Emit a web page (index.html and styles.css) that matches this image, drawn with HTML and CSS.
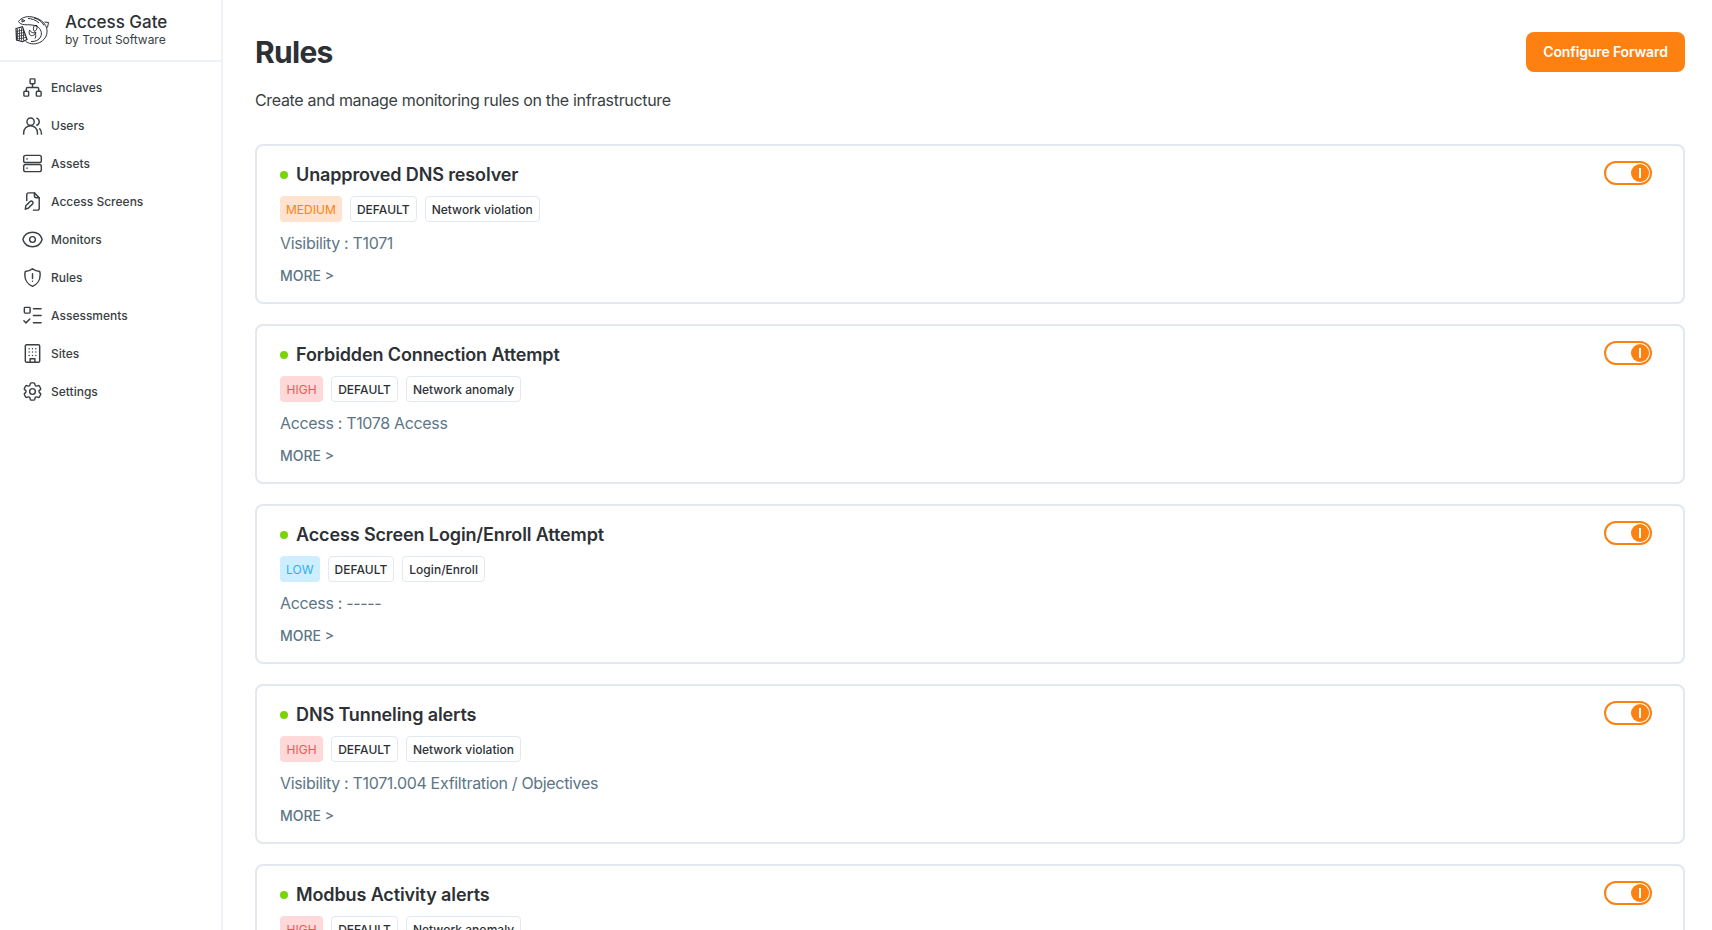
FILE: index.html
```html
<!DOCTYPE html>
<html lang="en">
<head>
<meta charset="utf-8">
<title>Rules - Access Gate</title>
<link rel="stylesheet" href="styles.css">
</head>
<body>
<aside class="sidebar">
  <div class="brand">
    <svg class="logo" viewBox="0 0 34 30" fill="none" stroke="#2b2f33" stroke-width="1">
      <path d="M3.500 6.500C6 3 11 1 16 1.800c6 .8 11.500 3.500 14.500 8.500 2.500 4.500 2 10-1.500 14-3.500 4-9.500 5.500-14.500 4-1.500-.4-3-1.200-4-2"/>
      <path d="M3.500 6.500c1 1.800 3 3 6 3.200 4 .3 9-.5 13 2 3.500 2.300 5 6.500 3 10.300-1.500 3-5 4.800-9.500 4.500"/>
      <path d="M7 4.500l3 1.200-3 1.300zM13 3.500c3.500 0 8 1.500 11 4.500M19 3c4.500 1.200 8 3.500 10 7.500M29.500 7l4 .5-1 5"/>
      <path d="M14.500 15c1.500 2.500 3.500 3.500 6.500 2.500-1 3-4 3.800-6 2.500-1-.8-1-3-.5-5zM19.500 10.500c-1.500 2-1.500 4 0 6 2-1 3-3 2.500-6zM20 18c1 2 1 3.500 0 5.500"/>
      <path d="M1 13.500l6.500-1.800L12 24.500l-4.500 2-6-1.500z" stroke-width="1.200"/>
      <path d="M2.500 14v10.500M4.500 13.500v11.500M6.500 13v12.500M8.500 14.500v11M1 16.500l7-1.500M1 19l8-1.500M1.500 21.500l8.500-1.500M1.500 24l9.500-1.500" stroke-width=".8"/>
    </svg>
    <div class="brand-text">
      <div class="brand-name">Access Gate</div>
      <div class="brand-sub">by Trout Software</div>
    </div>
  </div>
  <nav class="nav">
    <a class="nav-item"><svg class="nav-icon" viewBox="0 0 24 24"><rect x="9.500" y="3" width="5" height="5" rx=".8"/><rect x="3" y="16" width="5" height="5" rx="1"/><rect x="16" y="16" width="5" height="5" rx="1"/><path d="M12 8v4M5.500 16v-2.500A1.500 1.500 0 0 1 7 12h10a1.500 1.500 0 0 1 1.500 1.500V16"/></svg>Enclaves</a>
    <a class="nav-item"><svg class="nav-icon" viewBox="0 0 24 24"><circle cx="10" cy="8" r="3.800"/><path d="M2.800 21v-1.500a7.200 7.200 0 0 1 14.400 0V21M16.500 4.300a4 4 0 0 1 0 7.400M19.500 15.500a7 7 0 0 1 1.800 4.500v1"/></svg>Users</a>
    <a class="nav-item"><svg class="nav-icon" viewBox="0 0 24 24"><rect x="2.800" y="3.500" width="18.400" height="7.500" rx="2"/><rect x="2.800" y="13" width="18.400" height="7.500" rx="2"/><path d="M6 7.200h.6M6 16.800h.6"/></svg>Assets</a>
    <a class="nav-item"><svg class="nav-icon" viewBox="0 0 24 24"><path d="M6 11V5a2 2 0 0 1 2-2h6l5 5v11a2 2 0 0 1-2 2h-4"/><path d="M14 3v3a2 2 0 0 0 2 2h3"/><path d="M5 16.500l4.500-4.500a1.700 1.700 0 0 1 2.500 2.500L7.500 19 4.500 20z"/></svg>Access Screens</a>
    <a class="nav-item"><svg class="nav-icon" viewBox="0 0 24 24"><path d="M2.036 12.322a1.012 1.012 0 0 1 0-.639C3.423 7.510 7.360 4.500 12 4.500c4.638 0 8.573 3.007 9.963 7.178.07.207.07.431 0 .639C20.577 16.490 16.640 19.500 12 19.500c-4.638 0-8.573-3.007-9.963-7.178Z"/><circle cx="12" cy="12" r="3"/></svg>Monitors</a>
    <a class="nav-item"><svg class="nav-icon" viewBox="0 0 24 24"><path d="M12 2.800c2 1.700 4.500 2.700 7.500 2.900.3 1 .5 2.100.5 3.300 0 5.600-3.400 10.400-8 12.200-4.600-1.800-8-6.600-8-12.200 0-1.200.2-2.300.5-3.300 3-.2 5.500-1.200 7.500-2.900Z"/><path d="M12 8v5M12 16h.01"/></svg>Rules</a>
    <a class="nav-item"><svg class="nav-icon" viewBox="0 0 24 24"><rect x="3.500" y="3.500" width="6" height="6" rx=".8"/><path d="M13 5h8M13 12h8M13 19.500h8M3 17.500l2.200 2.200 4-4"/></svg>Assessments</a>
    <a class="nav-item"><svg class="nav-icon" viewBox="0 0 24 24"><rect x="4.500" y="2.800" width="15" height="18.400" rx="1.500"/><path d="M9.500 21v-3.500h5V21M8.500 7h.01M12 7h.01M15.500 7h.01M8.500 10.500h.01M12 10.500h.01M15.500 10.500h.01M8.500 14h.01M12 14h.01M15.500 14h.01"/></svg>Sites</a>
    <a class="nav-item"><svg class="nav-icon" viewBox="0 0 24 24"><path d="M9.594 3.940c.09-.542.56-.94 1.110-.94h2.593c.55 0 1.020.398 1.110.94l.213 1.281c.063.374.313.686.645.87.074.04.147.083.22.127.325.196.72.257 1.075.124l1.217-.456a1.125 1.125 0 0 1 1.370.49l1.296 2.247a1.125 1.125 0 0 1-.26 1.431l-1.003.827c-.293.241-.438.613-.43.992a7.723 7.723 0 0 1 0 .255c-.008.378.137.75.43.991l1.004.827c.424.35.534.955.26 1.430l-1.298 2.247a1.125 1.125 0 0 1-1.369.491l-1.217-.456c-.355-.133-.75-.072-1.076.124a6.470 6.470 0 0 1-.22.128c-.331.183-.581.495-.644.869l-.213 1.281c-.09.543-.56.94-1.110.94h-2.594c-.55 0-1.019-.398-1.110-.94l-.213-1.281c-.062-.374-.312-.686-.644-.87a6.520 6.520 0 0 1-.22-.127c-.325-.196-.72-.257-1.076-.124l-1.217.456a1.125 1.125 0 0 1-1.369-.49l-1.297-2.247a1.125 1.125 0 0 1 .26-1.431l1.004-.827c.292-.24.437-.613.43-.991a6.932 6.932 0 0 1 0-.255c.007-.38-.138-.751-.43-.992l-1.004-.827a1.125 1.125 0 0 1-.26-1.430l1.297-2.247a1.125 1.125 0 0 1 1.370-.491l1.216.456c.356.133.751.072 1.076-.124.072-.044.146-.086.22-.128.332-.183.582-.495.644-.869l.214-1.280Z"/><circle cx="12" cy="12" r="3"/></svg>Settings</a>
  </nav>
</aside>
<main class="main">
  <header class="page-head">
    <h1 class="page-title">Rules</h1>
    <button class="primary-btn">Configure Forward</button>
  </header>
  <p class="page-desc">Create and manage monitoring rules on the infrastructure</p>
  <section class="rule-list">
    <article class="rule">
      <div class="rule-body">
        <h2 class="rule-title"><span class="dot"></span>Unapproved DNS resolver</h2>
        <div class="tags"><span class="tag tag-medium">MEDIUM</span><span class="tag">DEFAULT</span><span class="tag">Network violation</span></div>
        <p class="rule-meta">Visibility : T1071</p>
        <a class="more">MORE &gt;</a>
      </div>
      <span class="toggle"><span class="knob"></span></span>
    </article>
    <article class="rule">
      <div class="rule-body">
        <h2 class="rule-title"><span class="dot"></span>Forbidden Connection Attempt</h2>
        <div class="tags"><span class="tag tag-high">HIGH</span><span class="tag">DEFAULT</span><span class="tag">Network anomaly</span></div>
        <p class="rule-meta">Access : T1078 Access</p>
        <a class="more">MORE &gt;</a>
      </div>
      <span class="toggle"><span class="knob"></span></span>
    </article>
    <article class="rule">
      <div class="rule-body">
        <h2 class="rule-title"><span class="dot"></span>Access Screen Login/Enroll Attempt</h2>
        <div class="tags"><span class="tag tag-low">LOW</span><span class="tag">DEFAULT</span><span class="tag">Login/Enroll</span></div>
        <p class="rule-meta">Access : -----</p>
        <a class="more">MORE &gt;</a>
      </div>
      <span class="toggle"><span class="knob"></span></span>
    </article>
    <article class="rule">
      <div class="rule-body">
        <h2 class="rule-title"><span class="dot"></span>DNS Tunneling alerts</h2>
        <div class="tags"><span class="tag tag-high">HIGH</span><span class="tag">DEFAULT</span><span class="tag">Network violation</span></div>
        <p class="rule-meta">Visibility : T1071.004 Exfiltration / Objectives</p>
        <a class="more">MORE &gt;</a>
      </div>
      <span class="toggle"><span class="knob"></span></span>
    </article>
    <article class="rule">
      <div class="rule-body">
        <h2 class="rule-title"><span class="dot"></span>Modbus Activity alerts</h2>
        <div class="tags"><span class="tag tag-high">HIGH</span><span class="tag">DEFAULT</span><span class="tag">Network anomaly</span></div>
        <p class="rule-meta">Access : T1078 Access</p>
        <a class="more">MORE &gt;</a>
      </div>
      <span class="toggle"><span class="knob"></span></span>
    </article>
  </section>
</main>
</body>
</html>
```
FILE: styles.css
```css
* { box-sizing: border-box; }
html, body { height: 100%; }
body {
  margin: 0;
  display: flex;
  height: 930px;
  overflow: hidden;
  background: #fff;
  color: #2d3135;
  font-family: Inter, "Liberation Sans", sans-serif;
}
.sidebar {
  width: 223px;
  flex: none;
  border-right: 2px solid #edf2f7;
}
.brand {
  height: 62px;
  display: flex;
  align-items: center;
  gap: 16px;
  padding: 0 0 0 15px;
  border-bottom: 2px solid #edf2f7;
}
.logo { width: 34px; height: 30px; flex: none; }
.brand-name { font-size: 17px; line-height: 20px; font-weight: 500; }
.brand-sub { font-size: 12px; line-height: 16px; color: #3a3f44; letter-spacing: -.03px; }
.nav { display: flex; flex-direction: column; padding-top: 6px; }
.nav-item {
  height: 38px;
  display: flex;
  align-items: center;
  gap: 7px;
  padding-left: 21px;
  font-size: 12px;
  font-weight: 500;
  color: #3a3f44;
}
.nav-icon {
  width: 23px;
  height: 23px;
  flex: none;
  fill: none;
  stroke: #3a3f44;
  stroke-width: 1.5;
  stroke-linecap: round;
  stroke-linejoin: round;
}
.main { flex: 1; min-width: 0; padding: 32px 27px 0 32px; }
.page-head { display: flex; justify-content: space-between; align-items: center; height: 40px; }
.page-title { margin: 0; font-size: 30px; font-weight: 700; letter-spacing: -.7px; }
.primary-btn {
  width: 159px;
  height: 40px;
  padding: 0 0 2px;
  border: 0;
  border-radius: 8px;
  background: #fd8111;
  color: #fff;
  font: 600 14px Inter, "Liberation Sans", sans-serif;
  letter-spacing: -.13px;
}
.page-desc { margin: 16px 0 0; font-size: 16px; line-height: 24px; color: #3a3f44; letter-spacing: -.33px; }
.rule-list { display: flex; flex-direction: column; gap: 20px; margin-top: 32px; }
.rule {
  height: 160px;
  flex: none;
  display: flex;
  justify-content: space-between;
  align-items: flex-start;
  padding: 15px 31px 0 23px;
  border: 2px solid #e2e8f0;
  border-radius: 8px;
}
.rule-title {
  display: flex;
  align-items: center;
  gap: 8px;
  margin: 0;
  font-size: 18px;
  line-height: 28px;
  font-weight: 600;
  letter-spacing: -.12px;
}
.dot { width: 8px; height: 8px; border-radius: 50%; background: #7cd30c; }
.tags { display: flex; gap: 8px; margin-top: 7px; }
.tag {
  height: 26px;
  display: flex;
  align-items: center;
  padding: 0 6px;
  border: 1px solid #e2e8f0;
  border-radius: 4px;
  font-size: 12px;
  font-weight: 500;
  letter-spacing: .03px;
  color: #2d3135;
}
.tag-medium { border: 0; background: #ffe3cf; color: #fd8111; font-weight: 400; }
.tag-high { border: 0; padding: 0 6.500px; background: #ffd9d9; color: #f25555; font-weight: 400; }
.tag-low { border: 0; background: #cdeeff; color: #2fb0ee; font-weight: 400; }
.rule-meta { margin: 9px 0 0; font-size: 16px; line-height: 24px; color: #5d7686; letter-spacing: -.33px; }
.more { display: block; margin-top: 11px; font-size: 14px; line-height: 20px; font-weight: 500; color: #5d7686; }
.toggle {
  width: 48px;
  height: 24px;
  display: flex;
  align-items: center;
  justify-content: flex-end;
  padding-right: 1px;
  border: 2px solid #fd8111;
  border-radius: 12px;
}
.knob {
  width: 18px;
  height: 18px;
  display: flex;
  align-items: center;
  justify-content: center;
  border-radius: 50%;
  background: #fd8111;
}
.knob::after { content: ""; width: 2px; height: 10px; background: #fff; }
```
